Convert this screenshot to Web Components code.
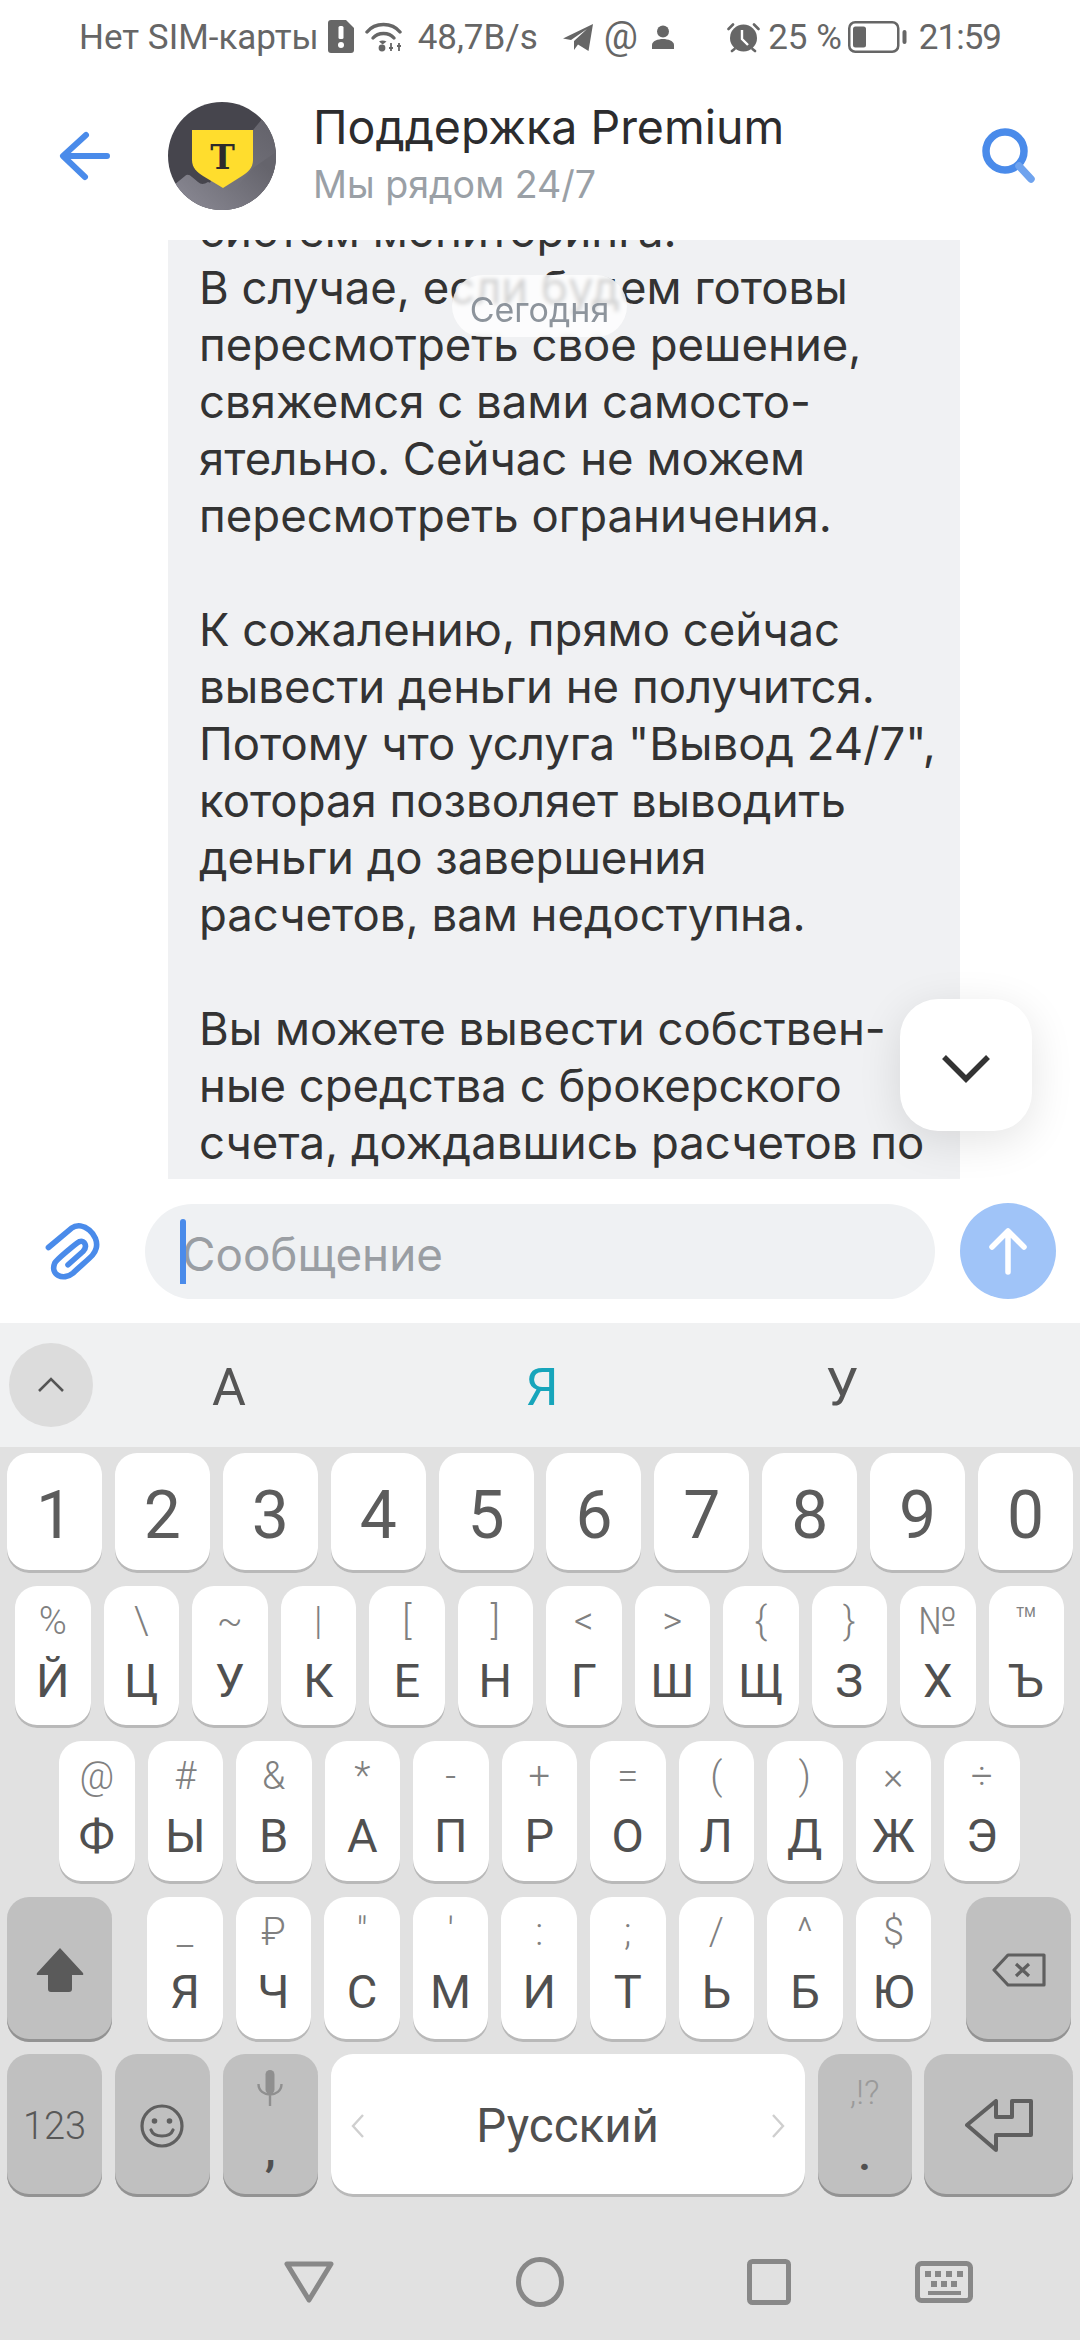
<!DOCTYPE html>
<html lang="ru">
<head>
<meta charset="utf-8">
<title>Поддержка Premium</title>
<style>
  html, body { margin: 0; padding: 0; background: #fff; }
  body { width: 1080px; height: 2340px; overflow: hidden; font-family: "Inter", "Noto Sans", sans-serif; }
</style>
</head>
<body>
<x-app></x-app>
<script>
const UI = '"Roboto", "Noto Sans", sans-serif';
const CHAT = '"Inter", "Noto Sans", sans-serif';

class XStatus extends HTMLElement {
  constructor() {
    super();
    this.attachShadow({ mode: 'open' }).innerHTML = `
    <style>
      :host { display: flex; height: 80px; box-sizing: border-box; padding: 19px 79px 0; justify-content: space-between; align-items: flex-start; color: #666; font: 400 35px/38px ${UI}; }
      .g { display: flex; align-items: center; height: 38px; white-space: nowrap; }
      svg { display: block; flex: none; }
    </style>
    <div class="g">
      <span>Нет SIM-карты</span>
      <svg style="margin-left:9px;margin-top:-3px" width="26" height="33" viewBox="0 0 26 33"><path fill="#666" d="M3 0H18L26 8V30Q26 33 23 33H3Q0 33 0 30V3Q0 0 3 0Z"/><rect x="10.5" y="6" width="5" height="13" rx="1.5" fill="#fff"/><circle cx="13" cy="25" r="3" fill="#fff"/></svg>
      <svg style="margin-left:11px;margin-top:-3px" width="37" height="31" viewBox="0 0 37 31"><g fill="none" stroke="#666" stroke-width="3.4" stroke-linecap="round"><path d="M2 11C10 1 27 1 35 11"/><path d="M8 17C13 11 24 11 29 17"/></g><circle cx="17" cy="27" r="3.4" fill="#666"/><path fill="#666" d="M14 20.5C16 19 19 19 21.5 20.5L17.7 23.5Z"/><path stroke="#666" stroke-width="1.8" fill="none" d="M26 22V30M34 22V30M24 27H28M32 25H36"/></svg>
      <span style="margin-left:16px">48,7B/s</span>
      <svg style="margin-left:25px;margin-top:-2px" width="30" height="27" viewBox="0 0 30 27"><path fill="#666" d="M0 14.5L30 0L25.5 27L15 20.5L11 26V17L24 5L8 16Z"/></svg>
      <span style="margin-left:11px;margin-top:-5px;font-size:38px">@</span>
      <svg style="margin-left:14px;margin-top:-2px" width="22" height="24" viewBox="0 0 22 24"><circle cx="11" cy="6.5" r="6" fill="#666"/><path fill="#666" d="M0 24V20C0 16 6 14 11 14S22 16 22 20V24Z"/></svg>
    </div>
    <div class="g">
      <svg style="margin-top:-1px" width="33" height="31" viewBox="0 0 33 31"><circle cx="16.500" cy="16" r="13.500" fill="#666"/><path d="M15 8V17L21 23" fill="none" stroke="#fff" stroke-width="2.4"/><g stroke="#666" stroke-width="2.6" stroke-linecap="round"><path d="M1.500 7L6 2.500M31.500 7L27 2.500M5 29L7.500 27M28 29L25.500 27"/></g></svg>
      <span style="margin-left:8px">25 %</span>
      <svg style="margin-left:6px;margin-top:-2px" width="59" height="32" viewBox="0 0 59 32"><rect x="1.250" y="1.250" width="49" height="29.500" rx="6" fill="none" stroke="#666" stroke-width="2.500"/><rect x="5" y="5.500" width="13" height="21" rx="2.500" fill="#666"/><rect x="54.500" y="9" width="4" height="14" rx="2" fill="#666"/></svg>
      <span style="margin-left:12px;letter-spacing:-1px">21:59</span>
    </div>`;
  }
}

class XChatHeader extends HTMLElement {
  constructor() {
    super();
    this.attachShadow({ mode: 'open' }).innerHTML = `
    <style>
      :host { display: flex; align-items: center; height: 160px; box-sizing: border-box; padding: 0 38px 8px 55px; }
      svg { display: block; flex: none; }
      .avatar { margin-left: 55px; }
      .t { margin-left: 37px; flex: 1; min-width: 0; white-space: nowrap; }
      .title { font: 400 46.500px/54px ${CHAT}; color: #2c2c2e; }
      .sub { margin-top: 3px; font: 400 37.600px/56px ${CHAT}; color: #9aa0a6; }
    </style>
    <svg width="58" height="60" viewBox="0 0 58 60"><path d="M52 30H9M31 9L8 30L30 51" fill="none" stroke="#4a8bea" stroke-width="6" stroke-linecap="round" stroke-linejoin="round"/></svg>
    <svg class="avatar" width="108" height="108" viewBox="0 0 108 108">
      <defs>
        <clipPath id="c"><circle cx="54" cy="54" r="54"/></clipPath>
        <linearGradient id="a" x1="1" y1="0" x2="0.300" y2="1"><stop offset="0" stop-color="#5f5e66"/><stop offset="1" stop-color="#7c7b84"/></linearGradient>
        <linearGradient id="b" x1="0" y1="1" x2="1" y2="0.400"><stop offset="0" stop-color="#8e8d98"/><stop offset="1" stop-color="#65646c"/></linearGradient>
      </defs>
      <g clip-path="url(#c)">
        <rect width="108" height="108" fill="#46454d"/>
        <path fill="url(#a)" d="M108 0V108H20L52 68L90 22Z"/>
        <path fill="url(#b)" d="M0 88L17 74Q20 71 24 75L30 80Q34 84 40 80L64 90L85 66L108 50V108H0Z"/>
      </g>
      <path fill="#ffdd2d" d="M24 28H85V58C85 66 80 70 74 74L55 86L35 74C29 70 24 66 24 58Z"/>
      <text x="54.500" y="67" text-anchor="middle" font-family="'DejaVu Serif','Liberation Serif',serif" font-weight="700" font-size="33" fill="#2b2a2c">T</text>
    </svg>
    <div class="t"><div class="title"><slot name="title"></slot></div><div class="sub"><slot name="sub"></slot></div></div>
    <svg style="margin-top:6px" width="64" height="70" viewBox="0 0 64 70"><circle cx="27" cy="27" r="19" fill="none" stroke="#4a8bea" stroke-width="7.500"/><path d="M41 42L53 55" stroke="#6fa3ee" stroke-width="7.500" stroke-linecap="round"/></svg>`;
  }
}

class XBubble extends HTMLElement {
  constructor() {
    super();
    this.attachShadow({ mode: 'open' }).innerHTML = `<style>:host { display: block; width: 792px; margin: -38px 0 0 168px; box-sizing: border-box; padding: 0 0 40px 31px; background: #f0f1f3; color: #333; font: 400 45.500px/57px ${CHAT}; white-space: pre; }</style><slot></slot>`;
  }
}

class XMessages extends HTMLElement {
  constructor() {
    super();
    this.attachShadow({ mode: 'open' }).innerHTML = `
    <style>
      :host { display: block; position: relative; height: 939px; }
      .scroll { height: 100%; overflow: hidden; }
      .pill { position: absolute; left: 452px; top: 35px; width: 175px; height: 62px; box-sizing: border-box; padding-top: 7px; border-radius: 31px; background: rgba(255,255,255,.78); -webkit-backdrop-filter: blur(2px); backdrop-filter: blur(2px); display: flex; align-items: center; justify-content: center; color: #8d949c; font: 400 34px/40px ${CHAT}; }
      .down { position: absolute; left: 900px; top: 759px; width: 132px; height: 132px; box-sizing: border-box; padding-top: 8px; border-radius: 38px; background: #fff; box-shadow: 0 10px 44px rgba(0,0,0,.11); display: flex; align-items: center; justify-content: center; }
      svg { display: block; }
    </style>
    <div class="scroll"><slot></slot></div>
    <div class="pill">Сегодня</div>
    <div class="down"><svg width="52" height="34" viewBox="0 0 52 34"><path d="M4 5L26 27L48 5" fill="none" stroke="#333" stroke-width="5.500"/></svg></div>`;
  }
}

class XComposer extends HTMLElement {
  constructor() {
    super();
    this.attachShadow({ mode: 'open' }).innerHTML = `
    <style>
      :host { display: flex; align-items: center; height: 144px; box-sizing: border-box; padding-left: 43px; }
      svg { display: block; flex: none; }
      .input { margin-left: 42px; width: 790px; height: 95px; border-radius: 48px; background: #eff1f3; position: relative; display: flex; align-items: center; padding: 8px 0 0 37px; box-sizing: border-box; color: #9a9ea3; font: 400 45.800px/60px ${CHAT}; }
      .caret { position: absolute; left: 35px; top: 15px; width: 6px; height: 65px; background: #4a8bea; border-radius: 3px 3px 0 0; }
      .send { margin-left: 25px; width: 96px; height: 96px; border-radius: 50%; background: #a0c4f8; display: flex; align-items: center; justify-content: center; }
    </style>
    <svg width="60" height="63" viewBox="130 85 180 190"><path d="M146 168L215 110C250 85 300 130 290 170C285 190 275 195 220 245C190 270 150 250 165 215C170 205 230 155 240 150C255 145 265 165 250 180L205 220" fill="none" stroke="#4a8bea" stroke-width="17" stroke-linecap="round" stroke-linejoin="round"/></svg>
    <div class="input"><span class="caret"></span>Сообщение</div>
    <div class="send"><svg width="40" height="50" viewBox="0 0 40 50"><path d="M20 46V6M4 21L20 5L36 21" fill="none" stroke="#fff" stroke-width="5.500" stroke-linecap="round" stroke-linejoin="round"/></svg></div>`;
  }
}

class XSuggest extends HTMLElement {
  constructor() {
    super();
    this.attachShadow({ mode: 'open' }).innerHTML = `
    <style>
      :host { display: grid; grid-template-columns: 84px 272px 354px 246px; align-items: center; height: 124px; box-sizing: border-box; padding: 0 0 0 9px; background: #f0f1f2; font: 400 52px/60px ${UI}; color: #555; }
      .up { width: 84px; height: 84px; border-radius: 50%; background: #dcdcdc; display: flex; align-items: center; justify-content: center; }
      .c { text-align: center; margin-top: 5px; }
      .on { color: #17a5bb; }
      svg { display: block; }
    </style>
    <div class="up"><svg width="30" height="18" viewBox="0 0 30 18"><path d="M3 15L15 3L27 15" fill="none" stroke="#555" stroke-width="2.600"/></svg></div>
    <div class="c">А</div><div class="c on">Я</div><div class="c">У</div>`;
  }
}

class XKey extends HTMLElement {
  constructor() {
    super();
    this.attachShadow({ mode: 'open' }).innerHTML = `
    <style>
      :host { display: block; box-sizing: border-box; height: 100%; border-radius: 22px; background: #fff; box-shadow: inset 0 -3px 0 #b9b9b9; color: #505050; text-align: center; font-family: ${UI}; position: relative; overflow: hidden; white-space: nowrap; }
      :host([fn]) { background: #c0c0c0; box-shadow: inset 0 -3px 0 #939393; }
      .h { height: 58px; margin-top: 6px; font: 300 38px/58px ${UI}; color: #808080; }
      .m { font: 400 47px/62px ${UI}; }
      :host([big]) .h { display: none; }
      :host([big]) .m { font: 400 66px/112px ${UI}; padding-top: 7px; color: #5c5c5c; }
      :host([center]) { display: flex; align-items: center; justify-content: center; flex-direction: column; }
      :host([center]) .h { display: none; }
      :host([center]) .m { font: 400 47.500px/60px ${UI}; display:flex; align-items:center; justify-content:center; }
      :host([txt]) .m { font: 300 38px/60px ${UI}; color: #585858; }
    </style>
    <div class="h"><slot name="hint"></slot></div>
    <div class="m"><slot></slot></div>`;
  }
}

class XKeyboard extends HTMLElement {
  constructor() {
    super();
    const r2 = [['Й','%'],['Ц','\\'],['У','~'],['К','|'],['Е','['],['Н',']'],['Г','<'],['Ш','>'],['Щ','{'],['З','}'],['Х','№'],['Ъ','™']];
    const r3 = [['Ф','@'],['Ы','#'],['В','&'],['А','*'],['П','-'],['Р','+'],['О','='],['Л','('],['Д',')'],['Ж','×'],['Э','÷']];
    const r4 = [['Я','_'],['Ч','₽'],['С','"'],['М',"'"],['И',':'],['Т',';'],['Ь','/'],['Б','^'],['Ю','$']];
    const esc = s => s.replace(/&/g,'&amp;').replace(/</g,'&lt;').replace(/>/g,'&gt;');
    const k = ([m,h]) => `<x-key><span slot="hint">${esc(h)}</span>${m}</x-key>`;
    this.attachShadow({ mode: 'open' }).innerHTML = `
    <style>
      :host { display: block; box-sizing: border-box; padding-top: 6px; height: 750px; background: #e1e1e1; }
      .row { display: grid; column-gap: 12.900px; margin-bottom: 13px; }
      .r1 { grid-template-columns: repeat(10, 95px); padding-left: 7px; height: 120px; }
      .r2 { grid-template-columns: repeat(12, 75.500px); column-gap: 13px; padding-left: 15px; height: 142px; }
      .r3 { grid-template-columns: repeat(11, 75.500px); column-gap: 13px; padding-left: 59px; height: 143px; }
      .r4 { display: flex; column-gap: 13.100px; padding-left: 7px; height: 145px; }
      .r4 x-key { flex: none; width: 75.500px; }
      .r4 x-key.sh { width: 105px; margin-right: 22px; }
      .r4 x-key.de { width: 105px; margin-left: 22px; }
      .r5 { grid-template-columns: 95px 95px 95px 474px 94px 149px; padding-left: 7px; height: 143px; margin-bottom: 0; margin-top: -1px; }
      svg { display: block; }
      .stack { display: flex; flex-direction: column; align-items: center; justify-content: flex-start; height: 143px; width: 100%; }
      .space { display: flex; width: 474px; justify-content: space-between; align-items: center; box-sizing: border-box; padding: 0 18px; height: 100%; }
      .faint { color: #9a9a9a; font: 300 34px/40px ${UI}; }
      .mid { color: #505050; font: 500 48px/40px ${UI}; }
    </style>
    <div class="row r1">${[1,2,3,4,5,6,7,8,9,0].map(d => `<x-key big>${d}</x-key>`).join('')}</div>
    <div class="row r2">${r2.map(k).join('')}</div>
    <div class="row r3">${r3.map(k).join('')}</div>
    <div class="row r4">
      <x-key class="sh" fn center><svg width="48" height="44" viewBox="0 0 48 44"><path fill="#5a5a5a" d="M24 0L47 25Q48 27 46 27H36V41Q36 44 33 44H15Q12 44 12 41V27H2Q0 27 1 25Z"/></svg></x-key>
      ${r4.map(k).join('')}
      <x-key class="de" fn center><svg width="54" height="34" viewBox="0 0 54 34"><path d="M2 17L16 2H52V32H16Z" fill="none" stroke="#5f5f5f" stroke-width="3.200" stroke-linejoin="round"/><path d="M24 11L37 23M37 11L24 23" stroke="#5f5f5f" stroke-width="3.200"/></svg></x-key>
    </div>
    <div class="row r5">
      <x-key fn center txt>123</x-key>
      <x-key fn center><svg width="44" height="44" viewBox="0 0 44 44"><circle cx="22" cy="22" r="20" fill="none" stroke="#5f5f5f" stroke-width="3.200"/><circle cx="14.500" cy="17" r="2.800" fill="#5f5f5f"/><circle cx="29.500" cy="17" r="2.800" fill="#5f5f5f"/><path d="M11 26C14 34 30 34 33 26" fill="none" stroke="#5f5f5f" stroke-width="3.200" stroke-linecap="round"/></svg></x-key>
      <x-key fn center><div class="stack"><svg style="margin-top:16px" width="26" height="36" viewBox="0 0 26 36"><rect x="8.500" y="0" width="9" height="24" rx="4.500" fill="#8f8f8f"/><path d="M1.500 14C1.500 28 24.500 28 24.500 14M13 25V36" fill="none" stroke="#8f8f8f" stroke-width="2.400"/></svg><span class="mid" style="margin-top:23px">,</span></div></x-key>
      <x-key center><div class="space"><svg width="16" height="26" viewBox="0 0 16 26"><path d="M14 2L4 13L14 24" fill="none" stroke="#cfcfcf" stroke-width="2.400"/></svg><span style="font-weight:400">Русский</span><svg width="16" height="26" viewBox="0 0 16 26"><path d="M2 2L12 13L2 24" fill="none" stroke="#cfcfcf" stroke-width="2.400"/></svg></div></x-key>
      <x-key fn center><div class="stack"><span class="faint" style="margin-top:18px">,!?</span><span class="mid" style="margin-top:22px">.</span></div></x-key>
      <x-key fn center><svg width="68" height="53" viewBox="0 0 68 53"><path d="M2 26L31 2V18H47V2H66V36H31V51Z" fill="none" stroke="#5f5f5f" stroke-width="4" stroke-linejoin="round"/></svg></x-key>
    </div>`;
  }
}

class XNav extends HTMLElement {
  constructor() {
    super();
    this.attachShadow({ mode: 'open' }).innerHTML = `
    <style>
      :host { display: flex; align-items: center; box-sizing: border-box; height: 143px; padding: 27px 0 0 284px; background: #e1e1e1; }
      :host > svg { display: block; flex: none; }
    </style>
    <svg width="50" height="42" viewBox="0 0 50 42"><path d="M3 3H47L25 39Z" fill="none" stroke="#888" stroke-width="5" stroke-linejoin="round"/></svg>
    <svg style="margin-left:182px" width="48" height="50" viewBox="0 0 48 50"><ellipse cx="24" cy="25" rx="21.500" ry="22.500" fill="none" stroke="#888" stroke-width="5"/></svg>
    <svg style="margin-left:183px" width="44" height="46" viewBox="0 0 44 46"><rect x="2.500" y="2.500" width="39" height="41" rx="3" fill="none" stroke="#888" stroke-width="5"/></svg>
    <svg style="margin-left:124px" width="58" height="42" viewBox="0 0 58 42"><rect x="2.500" y="2.500" width="53" height="37" rx="4" fill="none" stroke="#888" stroke-width="5"/><path fill="#888" d="M10 10h6v6h-6zM20 10h6v6h-6zM31 10h6v6h-6zM42 10h6v6h-6zM16 20h6v6h-6zM26 20h6v6h-6zM36 20h6v6h-6zM13 30h33v4h-33z"/></svg>`;
  }
}

class XApp extends HTMLElement {
  constructor() {
    super();
    this.attachShadow({ mode: 'open' }).innerHTML = `
    <style>:host { display: flex; flex-direction: column; width: 1080px; height: 2340px; background: #fff; overflow: hidden; }</style>
    <x-status></x-status>
    <x-chat-header><span slot="title">Поддержка Premium</span><span slot="sub">Мы рядом 24/7</span></x-chat-header>
    <x-messages><x-bubble>систем мониторинга.
В случае, если будем готовы
пересмотреть свое решение,
свяжемся с вами самосто-
ятельно. Сейчас не можем
пересмотреть ограничения.

К сожалению, прямо сейчас
вывести деньги не получится.
Потому что услуга "Вывод 24/7",
которая позволяет выводить
деньги до завершения
расчетов, вам недоступна.

Вы можете вывести собствен-
ные средства с брокерского
счета, дождавшись расчетов по
</x-bubble></x-messages>
    <x-composer></x-composer>
    <x-suggest></x-suggest>
    <x-keyboard></x-keyboard>
    <x-nav></x-nav>`;
  }
}

customElements.define('x-status', XStatus);
customElements.define('x-chat-header', XChatHeader);
customElements.define('x-bubble', XBubble);
customElements.define('x-messages', XMessages);
customElements.define('x-composer', XComposer);
customElements.define('x-suggest', XSuggest);
customElements.define('x-key', XKey);
customElements.define('x-keyboard', XKeyboard);
customElements.define('x-nav', XNav);
customElements.define('x-app', XApp);
</script>
</body>
</html>
